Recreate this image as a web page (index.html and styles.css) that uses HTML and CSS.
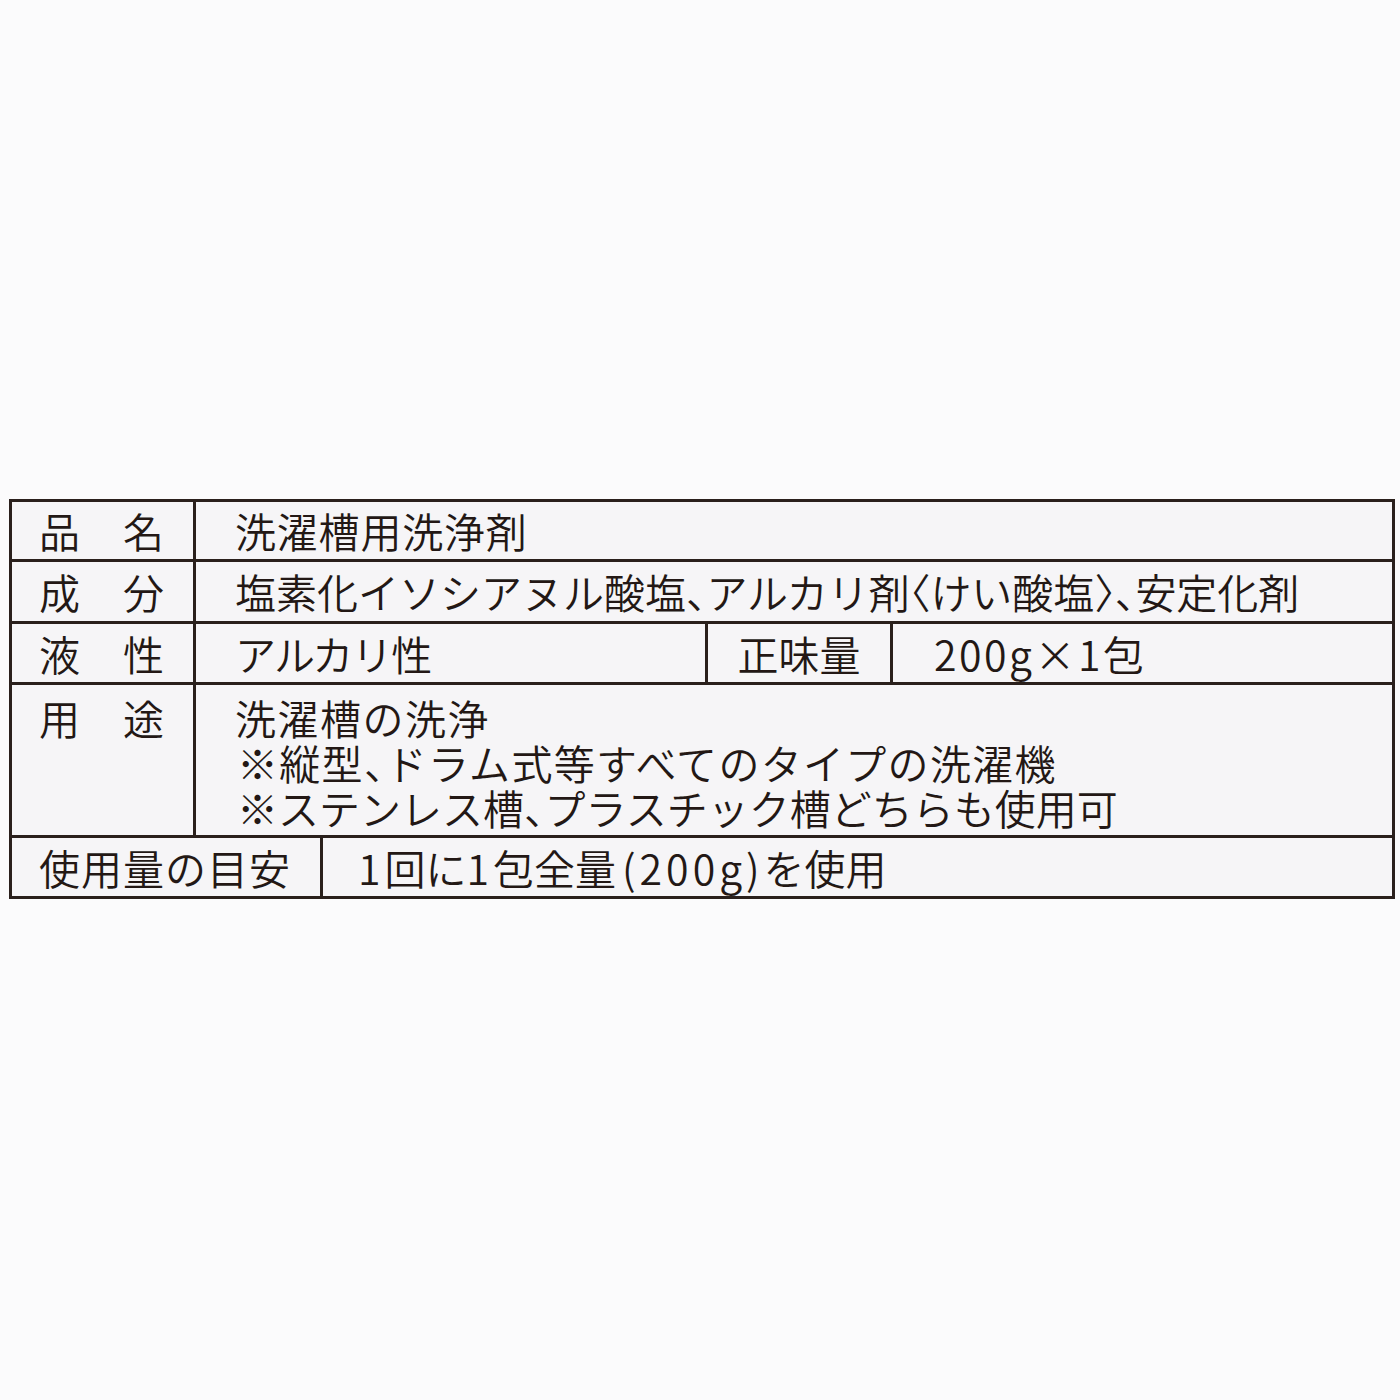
FILE: index.html
```html
<!DOCTYPE html>
<html lang="ja">
<head>
<meta charset="utf-8">
<title>洗濯槽用洗浄剤</title>
<link rel="stylesheet" href="styles.css">
</head>
<body>
<div class="sheet">
  <div class="spec">
    <div class="row r1">
      <div class="label spaced"><span>品</span><span>名</span></div>
      <div class="value v-name">洗濯槽用洗浄剤</div>
    </div>
    <div class="row r2">
      <div class="label spaced"><span>成</span><span>分</span></div>
      <div class="value">塩素化イソシアヌル酸塩<span class="p">、</span>アルカリ剤<span class="p">〈</span>けい酸塩<span class="p">〉、</span>安定化剤</div>
    </div>
    <div class="row r3">
      <div class="label spaced"><span>液</span><span>性</span></div>
      <div class="value v-liq">アルカリ性</div>
      <div class="value v-netlabel">正味量</div>
      <div class="value v-net"><span class="num3">200g×1</span>包</div>
    </div>
    <div class="row r4">
      <div class="label spaced top"><span>用</span><span>途</span></div>
      <div class="value multi">
        <div class="l1">洗濯槽の洗浄</div>
        <div class="l2">※縦型<span class="p">、</span>ドラム式等すべてのタイプの洗濯機</div>
        <div class="l3">※ステンレス槽<span class="p">、</span>プラスチック槽どちらも使用可</div>
      </div>
    </div>
    <div class="row r5">
      <div class="label wide">使用量の目安</div>
      <div class="value v-use"><span class="num5">1</span>回に<span class="num5">1</span>包全量<span class="par open">(</span><span class="num5">200g</span><span class="par">)</span>を使用</div>
    </div>
  </div>
</div>
</body>
</html>
```

FILE: styles.css
```css
html, body {
  margin: 0;
  padding: 0;
  background: #fbfbfc;
}

body {
  width: 1400px;
  height: 1400px;
  font-family: "Noto Sans CJK JP", "Noto Sans", sans-serif;
  font-weight: 350;
  color: #231815;
}

.sheet {
  padding: 499px 5px 0 9px;
}

.spec {
  border: 3px solid #2a201c;
  background: #f6f5f7;
  width: 1380px;
}

.row {
  display: flex;
  font-size: 41px;
  line-height: 45px;
}

.row + .row {
  border-top: 3px solid #2a201c;
}

.r1 { height: 57px; }
.r2 { height: 59px; }
.r3 { height: 58px; }
.r4 { height: 150px; }
.r5 { height: 58px; }

.label {
  flex: none;
  box-sizing: border-box;
  border-right: 3px solid #2a201c;
  width: 184px;
  display: flex;
  align-items: center;
}

.spaced {
  justify-content: space-between;
  padding: 0 29px 0 27px;
}

.label.top {
  align-items: flex-start;
  padding-top: 10px;
}

.label.wide {
  width: 311px;
  padding-left: 27px;
  letter-spacing: 1px;
}

.value {
  display: flex;
  align-items: center;
  padding-left: 39px;
  white-space: nowrap;
  flex: 1;
}

.v-name {
  letter-spacing: 0.8px;
}

.v-liq {
  flex: none;
  box-sizing: border-box;
  border-right: 3px solid #2a201c;
  width: 512px;
  letter-spacing: -1.5px;
}

.v-netlabel {
  flex: none;
  width: 185px;
  box-sizing: border-box;
  border-right: 3px solid #2a201c;
  padding-left: 0;
  justify-content: center;
}

.v-net {
  padding-left: 41px;
}

.num3 {
  letter-spacing: 2.5px;
}

.multi {
  flex-direction: column;
  align-items: flex-start;
  padding-top: 10px;
}

.l1 {
  letter-spacing: 1.5px;
}

.l2 {
  padding-left: 2px;
  letter-spacing: 1.3px;
}

.l3 {
  padding-left: 2px;
}

.v-use {
  padding-left: 35px;
}

.num5 {
  letter-spacing: 4px;
}

.par {
  letter-spacing: 4px;
}

.par.open {
  margin-left: 6px;
}

.p {
  font-feature-settings: "halt" 1;
}
```
